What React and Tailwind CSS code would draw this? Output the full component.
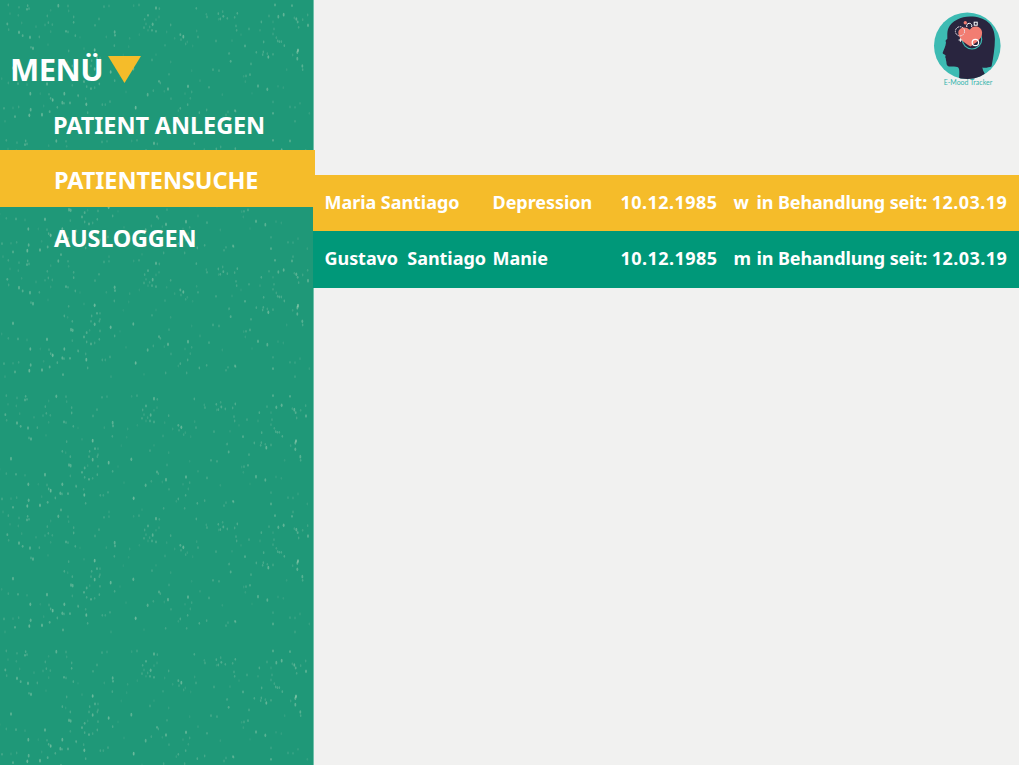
import React from "react";

// One tile of paper grain in third-pixels: [x, y, opacity in percent].
const GRAIN = [
  [83,3,30],[81,14,32],[87,12,25],[25,1,22],[57,8,18],[30,27,12],[55,32,15],[22,58,34],[57,83,40],[68,93,34],[26,75,20],[90,98,38],[118,97,24],
  [142,34,22],[145,54,24],[157,60,18],[135,61,16],[175,3,38],[152,17,12],[204,4,20],[221,37,24],[221,53,30],[206,19,15],[198,80,32],[204,82,22],
  [226,93,26],[152,81,14],[297,43,24],[285,62,24],[312,6,22],[327,4,16],[344,82,38],[345,92,32],[343,123,24],[319,97,14],[93,128,26],[99,131,38],
  [144,120,10],[206,139,24],[284,136,48],[252,132,12],[193,168,28],[203,172,12],[217,184,26],[275,168,26],[291,160,32],[300,160,18],[273,184,24],
  [284,193,40],[298,184,22],[300,178,20],[39,190,40],[213,209,36],[218,211,36],[260,218,32],[252,231,34],[269,211,14],[300,213,24],[298,238,26],
  [332,202,46],[344,228,26],[25,235,18],[54,237,30],[81,240,14],[141,238,42],[91,267,42],[147,269,20],[193,267,42],[217,242,18],[234,272,22],
  [273,252,34],[260,246,26],[284,249,20],[152,281,30],[158,286,48],[187,294,36],[172,308,28],[192,296,26],[210,295,32],[235,274,18],[259,299,46],
  [263,324,26],[257,282,20],[307,300,22],[316,300,18],[330,291,22],[12,311,26],[39,310,14],[45,336,34],[56,307,18],[92,315,38],[88,332,46],
  [126,330,44],[149,321,34],[189,344,34],[15,350,14],[333,350,14],[131,304,12],[417,1,20],[401,3,14],[468,10,40],[478,12,22],[444,32,32],
  [434,44,24],[458,59,38],[468,45,14],[432,69,24],[449,67,18],[456,77,30],[468,80,30],[438,58,16],[444,77,14],[477,37,14],[512,61,24],
  [389,101,14],[418,90,10],[386,126,10],[495,122,16],[541,90,34],[550,96,44],[543,105,20],[557,118,18],[562,112,14],[594,97,22],[589,11,26],
  [619,29,16],[621,37,24],[590,79,14],[456,166,22],[400,192,40],[512,172,14],[507,209,18],[477,230,34],[481,235,24],[460,258,20],[443,270,36],
  [504,253,40],[564,245,42],[493,260,12],[513,282,18],[378,262,10],[407,309,48],[541,311,26],[563,300,26],[575,262,18],[571,281,16],
  [535,318,14],[560,339,22],[497,339,22],[598,324,28],[620,316,24],[627,248,26],[600,228,14],[432,343,10],[555,267,12],[655,27,28],[668,21,20],
  [661,43,28],[670,35,32],[682,41,24],[704,38,24],[712,26,30],[708,64,22],[710,77,24],[656,44,14],[747,73,22],[648,109,24],[735,124,32],
  [688,146,18],[692,170,34],[639,195,26],[657,198,24],[686,147,12],[753,178,26],[750,210,30],[738,214,24],[731,215,12],[667,270,12],
  [705,318,34],[707,320,18],[684,322,18],[678,331,20],[774,244,36],[802,254,36],[696,108,12],[736,231,14],[825,1,34],[876,3,34],[807,34,20],
  [835,36,36],[851,30,42],[819,52,14],[822,73,18],[784,52,28],[889,43,38],[893,52,34],[883,40,20],[908,45,20],[924,62,38],[896,68,24],[923,31,20],
  [780,77,14],[833,109,26],[838,111,28],[844,111,26],[853,123,30],[829,99,20],[791,112,28],[819,88,18],[769,143,26],[790,142,26],[788,150,26],
  [802,147,20],[805,157,44],[819,149,24],[894,137,56],[892,143,38],[892,162,38],[907,184,36],[908,195,26],[878,151,18],[860,195,12],[834,245,12],
  [819,326,34],[819,292,18],[870,307,18],[885,308,16],[900,296,14],[928,326,14],[885,350,20],[850,249,12],[756,266,8],[723,90,10],[360,214,8],
  [5,222,12],[121,267,10],[240,98,8],[370,151,8],[468,150,10],[575,198,10],[500,82,12],[524,101,14],[578,124,10],[65,55,14],[108,66,14],
];

function Grain() {
  return (
    <svg
      className="absolute inset-0 size-full"
      viewBox="0 0 939 2295"
      preserveAspectRatio="none"
      aria-hidden="true"
    >
      <defs>
        <g id="grain-tile" fill="#b4d9bd">
          {GRAIN.map(([x, y, o], i) => (
            <ellipse key={i} cx={x} cy={y} rx={o > 30 ? 2.8 : 2.4} ry={o > 35 ? 5.5 : 4.2} opacity={(o * 1.05) / 100} />
          ))}
        </g>
      </defs>
      <use href="#grain-tile" x="0" y="14" />
      <use href="#grain-tile" x="-6" y="420" />
      <use href="#grain-tile" x="0" y="780" />
      <use href="#grain-tile" x="-6" y="1186" />
      <use href="#grain-tile" x="0" y="1546" />
      <use href="#grain-tile" x="-6" y="1952" />
    </svg>
  );
}

function Logo() {
  return (
    <svg className="block h-[78px] w-[70px]" viewBox="0 0 70 78" role="img" aria-label="E-Mood Tracker">
      <defs>
        <clipPath id="logo-disc">
          <circle cx="35.3" cy="33.7" r="33.3" />
        </clipPath>
      </defs>
      <circle cx="35.3" cy="33.7" r="33.3" fill="#3dbbb3" />
      <path
        clipPath="url(#logo-disc)"
        fill="#29253f"
        d="M38 4.500C29 4.500 19.500 9 16.500 16C15 19 15.400 23 15.300 27C13.500 28 13.300 29 14 30.500C13.700 34.500 11.500 38 10.600 41C10.800 42.300 13 42.300 13.600 43.300C13.600 44.500 12.800 45 13.600 46C14.200 47 13.600 48 14.200 49C14.800 50.500 14 52 15.500 53.700C18 55.500 22.500 53.500 26 55.200C27.600 56.500 27.300 60 27.300 62L27 68H58C54 64 51 60 50.300 55.500C53.500 56.300 57 55.200 59.500 54.500C61.200 46 62.900 36 62.900 27C62.900 12 53 4.500 38 4.500Z"
      />
      <circle cx="40" cy="27.300" r="9.700" fill="none" stroke="#3dbbb3" strokeWidth="1.200" />
      <path
        fill="#f27d72"
        d="M38.500 34.500C34.500 32.500 26.200 27 26.300 20.800C26.500 15.300 33.500 13.600 37.800 18C40.300 12.700 49.500 13.600 50.100 20.500C50.500 27.500 43 31 38.500 34.500Z"
      />
      <circle cx="33.300" cy="10.800" r="1.700" fill="#f27d72" />
      <rect x="42.200" y="10.200" width="3" height="3" fill="none" stroke="#fff" strokeWidth="1" />
      <circle cx="28" cy="19.300" r="4.600" fill="none" stroke="#e9dfe6" strokeWidth="1" strokeDasharray="1.800 0.800" />
      <path d="M34.900 15A2.600 2.600 0 1 1 39.600 15" fill="none" stroke="#fff" strokeWidth="1" />
      <circle cx="43.400" cy="30.500" r="3.200" fill="none" stroke="#fff" strokeWidth="1.200" />
      <path d="M28.400 26.200V29.800M26.600 28H30.200" stroke="#fff" strokeWidth="1" />
      <text x="11.700" y="73.300" textLength="48.500" lengthAdjust="spacingAndGlyphs" fill="#35b5ae" fontSize="7.500" className="font-['Lato','Liberation_Sans',sans-serif] font-normal">
        E-Mood Tracker
      </text>
    </svg>
  );
}

const MENU = [
  { label: "PATIENT ANLEGEN", row: "h-[50px] w-[313px] pl-[53px] pt-[2px] tracking-[-0.1px]" },
  { label: "PATIENTENSUCHE", row: "h-[57px] w-[315px] bg-[#f5bc2a] pl-[54px] pt-[5px] tracking-[-0.1px]" },
  { label: "AUSLOGGEN", row: "h-[57px] w-[313px] pl-[54px] pt-[7px] tracking-[-0.25px]" },
];

const PATIENTS = [
  { name: "Maria Santiago", diagnosis: "Depression", born: "10.12.1985", sex: "w", since: "12.03.19", row: "h-[56px] bg-[#f5bc2a]" },
  { name: "Gustavo  Santiago", diagnosis: "Manie", born: "10.12.1985", sex: "m", since: "12.03.19", row: "h-[57px] bg-[#009879]" },
];

export default function App() {
  return (
    <div className="flex h-[765px] w-[1019px] overflow-hidden bg-[#f1f1f0] font-['Noto_Sans','Open_Sans',sans-serif] font-bold text-white">
      <aside className="relative z-10 h-full w-[313px] shrink-0 bg-[#1f9878]">
        <Grain />
        <div className="relative flex flex-col">
          <div className="flex h-[100px] items-start pl-[10px] pt-[49px]">
            <h1 className="w-[98px] text-[31px] leading-[40px] tracking-[-0.5px]">MENÜ</h1>
            <svg className="mt-[7px] h-[27px] w-[33px]" viewBox="0 0 33 27" aria-hidden="true">
              <path d="M0 0H33L16.500 27Z" fill="#f5bc2a" />
            </svg>
          </div>
          <nav className="flex flex-col text-[23.500px]">
            {MENU.map((m) => (
              <a key={m.label} className={`flex items-center whitespace-nowrap ${m.row}`}>
                {m.label}
              </a>
            ))}
          </nav>
        </div>
      </aside>
      <main className="flex min-w-0 flex-1 flex-col border-l border-[#6fc0aa]">
        <header className="flex h-[175px] justify-end pr-[17px] pt-[12px]">
          <Logo />
        </header>
        <section className="-ml-px flex flex-col text-[18px]">
          {PATIENTS.map((p) => (
            <div
              key={p.name}
              className={`grid grid-cols-[168px_128px_113px_23px_1fr] items-center whitespace-pre pb-[2px] pl-[11.500px] tracking-[-0.05px] ${p.row}`}
            >
              <span>{p.name}</span>
              <span>{p.diagnosis}</span>
              <span className="tracking-[0.450px]">{p.born}</span>
              <span>{p.sex}</span>
              <span>
                <span className="tracking-[-0.120px]">in Behandlung seit: </span>
                <span className="tracking-[0.450px]">{p.since}</span>
              </span>
            </div>
          ))}
        </section>
      </main>
    </div>
  );
}
